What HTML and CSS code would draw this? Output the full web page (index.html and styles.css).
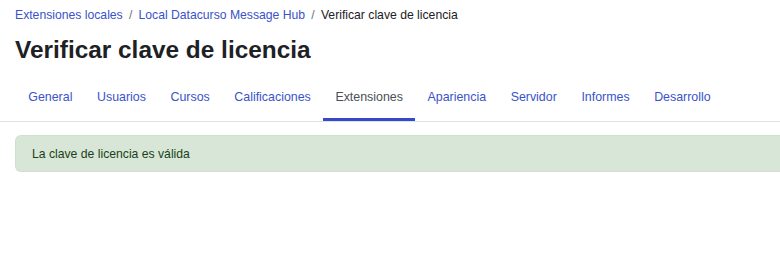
FILE: index.html
```html
<!DOCTYPE html>
<html lang="es">
<head>
<meta charset="utf-8">
<title>Verificar clave de licencia</title>
<link rel="stylesheet" href="styles.css">
</head>
<body>
<div class="page">
  <nav class="breadcrumb">
    <a href="#">Extensiones locales</a><span class="sep">/</span><a href="#">Local Datacurso Message Hub</a><span class="sep">/</span><span class="current">Verificar clave de licencia</span>
  </nav>
  <h1 class="title">Verificar clave de licencia</h1>
  <ul class="tabs">
    <li><a href="#">General</a></li>
    <li><a href="#">Usuarios</a></li>
    <li><a href="#">Cursos</a></li>
    <li><a href="#">Calificaciones</a></li>
    <li><a href="#" class="active">Extensiones</a></li>
    <li><a href="#">Apariencia</a></li>
    <li><a href="#">Servidor</a></li>
    <li><a href="#">Informes</a></li>
    <li><a href="#">Desarrollo</a></li>
  </ul>
  <div class="content">
    <div class="alert">La clave de licencia es válida</div>
  </div>
</div>
</body>
</html>
```
FILE: styles.css
```css
html, body {
  margin: 0;
  padding: 0;
  background: #fff;
  font-family: "Liberation Sans", Arial, sans-serif;
  color: #1d2125;
  overflow: hidden;
}
.page {
  width: 800px;
}
.breadcrumb {
  padding: 7px 0 0 15px;
  font-size: 12.2px;
  line-height: 16px;
  color: #1d2125;
}
.breadcrumb a {
  color: #3a53c9;
  text-decoration: none;
}
.breadcrumb .sep {
  color: #6a737b;
  padding: 0 6.2px;
}
.title {
  margin: 12px 0 0 15px;
  font-size: 24.4px;
  line-height: 30px;
  font-weight: 700;
}
.tabs {
  list-style: none;
  margin: 8px 0 0 0;
  padding: 0 0 0 16px;
  display: flex;
  border-bottom: 1px solid #dee2e6;
}
.tabs a {
  display: block;
  padding: 14.5px 12.3px 12.5px;
  font-size: 12.4px;
  line-height: 18px;
  color: #3a53c9;
  text-decoration: none;
  border-bottom: 3px solid transparent;
}
.tabs a.active {
  color: #495057;
  border-bottom-color: #3549c9;
}
.content {
  padding: 13px 0 0 15px;
}
.alert {
  background: #d7e6d6;
  border: 1px solid #cfe1cd;
  border-right: 0;
  border-radius: 6px 0 0 6px;
  color: #1c3f1a;
  font-size: 12.2px;
  line-height: 20px;
  padding: 7.5px 16px;
}
```
